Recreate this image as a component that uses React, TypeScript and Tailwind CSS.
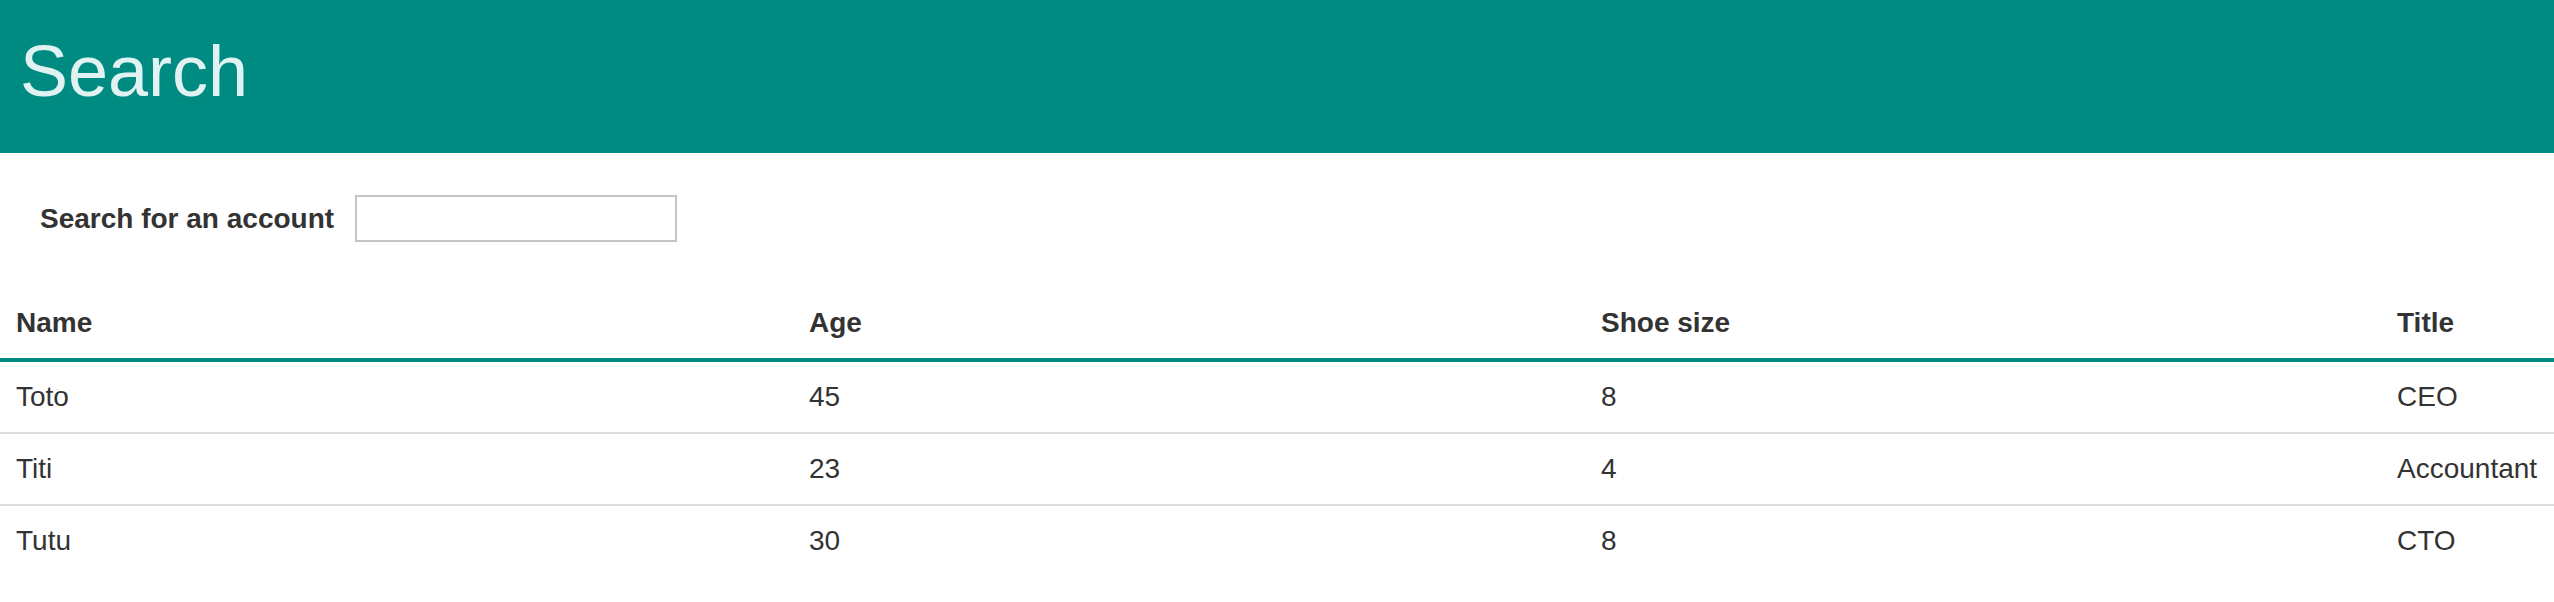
const accounts = [
  { name: 'Toto', age: 45, shoeSize: 8, title: 'CEO' },
  { name: 'Titi', age: 23, shoeSize: 4, title: 'Accountant' },
  { name: 'Tutu', age: 30, shoeSize: 8, title: 'CTO' },
];

export default function App() {
  return (
    <div className="min-h-screen bg-white text-[#333] font-['Liberation_Sans',Arial,sans-serif]">
      <header className="bg-[#008b82] pl-[20px] pt-[31px] pb-[42px]">
        <h1 className="text-[72px] leading-[80px] font-normal text-[#e0f2f1]">Search</h1>
      </header>

      <div className="flex items-center pl-[40px] pt-[42px] pb-[45px]">
        <label htmlFor="search" className="text-[28px] leading-[40px] font-bold mr-[21px]">
          Search for an account
        </label>
        <input
          id="search"
          type="text"
          className="w-[322px] h-[47px] border-2 border-[#c4c4c4] bg-white outline-none"
        />
      </div>

      <table className="w-full table-fixed border-collapse text-[28px] leading-[40px]">
        <colgroup>
          <col className="w-[793px]" />
          <col className="w-[792px]" />
          <col className="w-[796px]" />
          <col />
        </colgroup>
        <thead>
          <tr className="border-b-4 border-[#008b82]">
            <th className="text-left font-bold px-[16px] pt-[16px] pb-[15px]">Name</th>
            <th className="text-left font-bold px-[16px] pt-[16px] pb-[15px]">Age</th>
            <th className="text-left font-bold px-[16px] pt-[16px] pb-[15px]">Shoe size</th>
            <th className="text-left font-bold px-[16px] pt-[16px] pb-[15px]">Title</th>
          </tr>
        </thead>
        <tbody>
          {accounts.map((a, i) => (
            <tr key={a.name} className={i < accounts.length - 1 ? 'border-b-2 border-[#dddddd]' : ''}>
              <td className="px-[16px] py-[15px]">{a.name}</td>
              <td className="px-[16px] py-[15px]">{a.age}</td>
              <td className="px-[16px] py-[15px]">{a.shoeSize}</td>
              <td className="px-[16px] py-[15px] whitespace-nowrap">{a.title}</td>
            </tr>
          ))}
        </tbody>
      </table>
    </div>
  );
}
